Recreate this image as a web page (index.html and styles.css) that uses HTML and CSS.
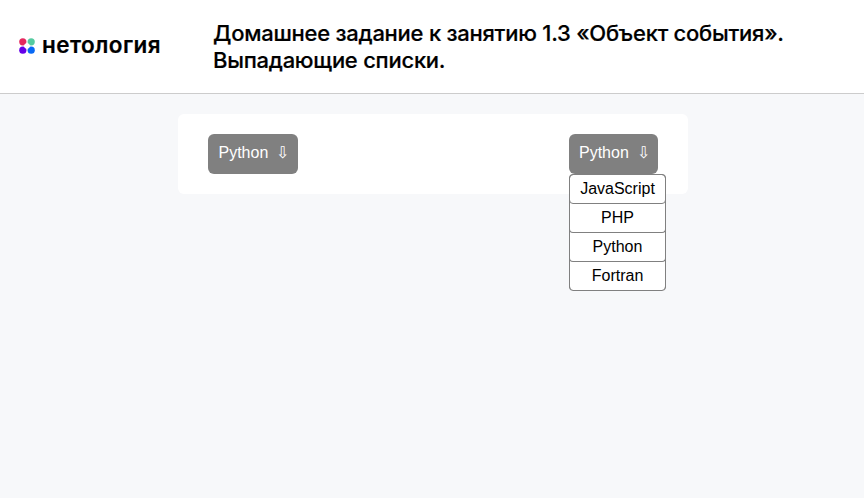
FILE: index.html
```html
<!DOCTYPE html>
<html lang="ru">
<head>
<meta charset="UTF-8">
<title>Выпадающие списки</title>
<link rel="stylesheet" href="styles.css">
</head>
<body>
<header class="header">
  <div class="logo">
    <svg class="logo__mark" viewBox="0 0 16 16" width="16" height="16">
      <circle fill="#e5295f" cx="3.8" cy="3.8" r="3.6"/>
      <circle fill="#55cba0" cx="12.2" cy="3.8" r="3.6"/>
      <circle fill="#6500e8" cx="3.8" cy="12.2" r="3.6"/>
      <circle fill="#0869f5" cx="12.2" cy="12.2" r="3.6"/>
      <circle fill="#fff" cx="8" cy="8" r="2.8"/>
    </svg>
    <span class="logo__name">нетология</span>
  </div>
  <h1 class="header__title"><span class="line">Домашнее задание к занятию 1.3 «Объект события».</span><span class="line">Выпадающие списки.</span></h1>
</header>
<main class="card">
  <div class="dropdown">
    <div class="dropdown__value">Python</div>
  </div>
  <div class="dropdown">
    <div class="dropdown__value">Python</div>
    <ul class="dropdown__list">
      <li class="dropdown__item">JavaScript</li>
      <li class="dropdown__item">PHP</li>
      <li class="dropdown__item">Python</li>
      <li class="dropdown__item">Fortran</li>
    </ul>
  </div>
</main>
</body>
</html>
```
FILE: styles.css
```css
* { box-sizing: border-box; }
html { height: 100%; }
body { margin: 0; min-height: 100vh; background: #f7f8fa; font: 16px/18px "Liberation Sans", Arial, sans-serif; color: #000; }
.header { display: flex; height: 94px; background: #fff; border-bottom: 1px solid #ccc; padding: 20px 0 0 19px; }
.logo { display: flex; width: 194px; height: 51px; align-items: center; gap: 7px; }
.logo__name { font: 600 22.5px/24px Inter, sans-serif; letter-spacing: 0.4px; margin-top: -2px; -webkit-text-stroke: 0.2px #000; }
.header__title { margin: 0; font: 500 22px/27px Inter, sans-serif; letter-spacing: -0.25px; -webkit-text-stroke: 0.2px #000; }
.line { display: block; white-space: nowrap; }
.card { display: flex; justify-content: space-between; width: 510px; height: 80px; margin: 20px 0 0 178px; padding: 20px 30px; background: #fff; border-radius: 6px; }
.dropdown { position: relative; width: 89.5px; }
.dropdown__value { height: 40px; padding: 10px 0 10px 10.5px; color: #fff; background: gray; border-radius: 6px; white-space: nowrap; }
.dropdown__value::after { content: "⇩"; margin-left: 8px; }
.dropdown__list { position: absolute; top: 40px; left: 0.5px; width: 97px; margin: 0; padding: 0; list-style: none; text-align: center; background: #fff; border: 1px solid gray; border-radius: 4px; }
.dropdown__item { height: 29px; padding: 5px 0 0; margin: 0 -1px; border: solid gray; border-width: 0 1px 1px; border-radius: 0 0 4px 4px; }
.dropdown__item:first-child { height: 30px; margin-top: -1px; border-top-width: 1px; border-radius: 4px; }
.dropdown__item:last-child { height: 28px; border-bottom: 0; }
```
